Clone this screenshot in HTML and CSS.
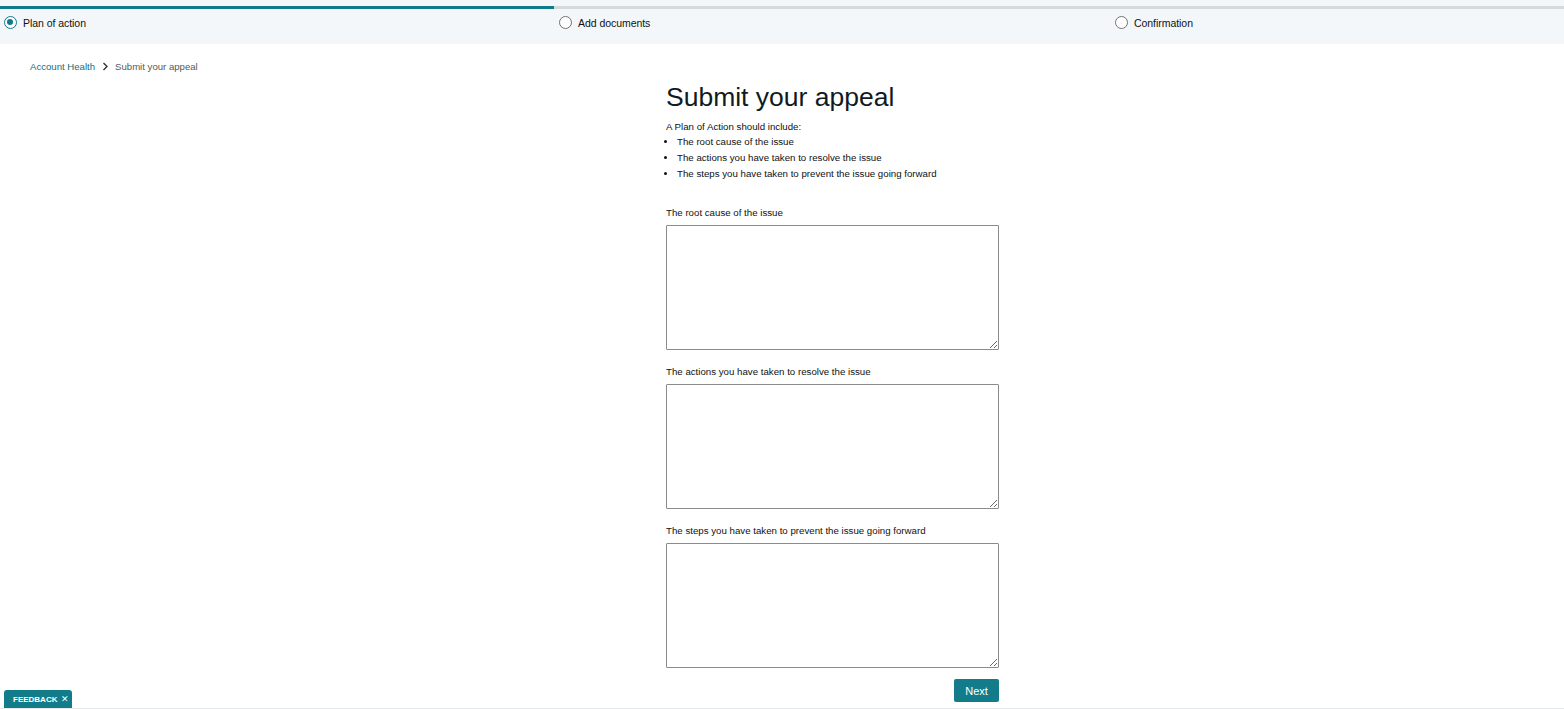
FILE: index.html
```html
<!DOCTYPE html>
<html lang="en">
<head>
<meta charset="utf-8">
<title>Submit your appeal</title>
<link rel="stylesheet" href="styles.css">
</head>
<body>
<header class="stepper">
  <div class="progress"><div class="progress-done"></div></div>
  <ol class="steps">
    <li class="step active"><span class="radio"></span><span>Plan of action</span></li>
    <li class="step"><span class="radio"></span><span>Add documents</span></li>
    <li class="step"><span class="radio"></span><span>Confirmation</span></li>
  </ol>
</header>
<div class="page">
  <nav class="crumbs">
    <a class="crumb-link" href="#">Account Health</a>
    <svg class="chev" width="7" height="9" viewBox="0 0 7 9"><path d="M1.5 1 L5 4.5 L1.5 8" fill="none" stroke="#333" stroke-width="1.4"/></svg>
    <span class="crumb-current">Submit your appeal</span>
  </nav>
  <main class="form">
    <h1 class="title">Submit your appeal</h1>
    <p class="intro">A Plan of Action should include:</p>
    <ul class="points">
      <li>The root cause of the issue</li>
      <li>The actions you have taken to resolve the issue</li>
      <li>The steps you have taken to prevent the issue going forward</li>
    </ul>
    <label class="field">
      <span class="label">The root cause of the issue</span>
      <textarea class="box"></textarea>
    </label>
    <label class="field">
      <span class="label">The actions you have taken to resolve the issue</span>
      <textarea class="box"></textarea>
    </label>
    <label class="field">
      <span class="label">The steps you have taken to prevent the issue going forward</span>
      <textarea class="box"></textarea>
    </label>
    <div class="actions"><button class="next" type="button">Next</button></div>
  </main>
</div>
<div class="feedback">FEEDBACK <span class="x">✕</span></div>
</body>
</html>
```
FILE: styles.css
```css
* { box-sizing: border-box; }
html, body { margin: 0; padding: 0; }
body {
  font-family: "Liberation Sans", Arial, sans-serif;
  color: #0f1111;
  background: #fff;
  width: 1564px;
  height: 709px;
  overflow: hidden;
  position: relative;
  border-bottom: 1px solid #e7e9ec;
}
.stepper {
  background: #f4f7fa;
  height: 44px;
  padding-top: 6px;
}
.progress {
  height: 3px;
  background: #d5d9dd;
}
.progress-done {
  width: 554px;
  height: 3px;
  background: #0f7b8a;
}
.steps {
  list-style: none;
  margin: 0;
  padding: 0;
  display: grid;
  grid-template-columns: 555px 556px 1fr;
}
.step {
  display: flex;
  align-items: center;
  gap: 6px;
  padding-left: 4px;
  height: 27px;
  font-size: 10.5px;
  letter-spacing: -0.05px;
  color: #0f1111;
}
.radio {
  width: 13px;
  height: 13px;
  border-radius: 50%;
  border: 1.5px solid #6f7373;
  background: #fff;
  display: inline-block;
  position: relative;
  flex: none;
}
.step.active .radio {
  border-color: #0f7b8a;
}
.step.active .radio::after {
  content: "";
  position: absolute;
  left: 2px;
  top: 2px;
  width: 6px;
  height: 6px;
  border-radius: 50%;
  background: #0f7b8a;
}
.page {
  display: flex;
  position: relative;
}
.crumbs {
  width: 666px;
  padding: 16px 0 0 30px;
  display: flex;
  align-items: flex-start;
  gap: 5px;
  font-size: 9.6px;
  line-height: 13px;
}
.crumb-link { color: #0f6f7e; text-decoration: none; }
.chev { margin: 2px 1px 0 2px; }
.crumb-current { color: #565959; }
.form {
  width: 333px;
  padding-top: 38px;
}
.title {
  margin: 0;
  font-weight: 400;
  font-size: 26.5px;
  line-height: 30px;
  color: #0f1b22;
}
.intro {
  margin: 8px 0 0;
  font-size: 9.7px;
  line-height: 14px;
}
.points {
  margin: 0;
  padding-left: 11px;
  font-size: 9.7px;
  line-height: 16px;
}
.field {
  display: flex;
  flex-direction: column;
  margin-top: 15px;
}
.field:first-of-type { margin-top: 24px; }
.label {
  font-size: 9.7px;
  line-height: 13px;
  margin-bottom: 6px;
}
.box {
  width: 333px;
  height: 125px;
  border: 1px solid #888c8c;
  border-radius: 1px;
  resize: vertical;
  font-family: inherit;
  background: #fff;
}
.actions {
  display: flex;
  justify-content: flex-end;
  margin-top: 11px;
}
.next {
  width: 45px;
  height: 23px;
  border: none;
  border-radius: 2px;
  background: #137c8b;
  color: #fff;
  font-family: inherit;
  font-size: 11px;
  padding: 0;
}
.feedback {
  position: absolute;
  left: 4px;
  bottom: 0;
  width: 68px;
  height: 18px;
  background: #137c8b;
  color: #fff;
  border-radius: 3px 3px 0 0;
  font-size: 8px;
  font-weight: 700;
  display: flex;
  align-items: center;
  padding-left: 9px;
  gap: 4px;
}
.feedback .x { font-weight: 400; font-size: 8.5px; }
```
